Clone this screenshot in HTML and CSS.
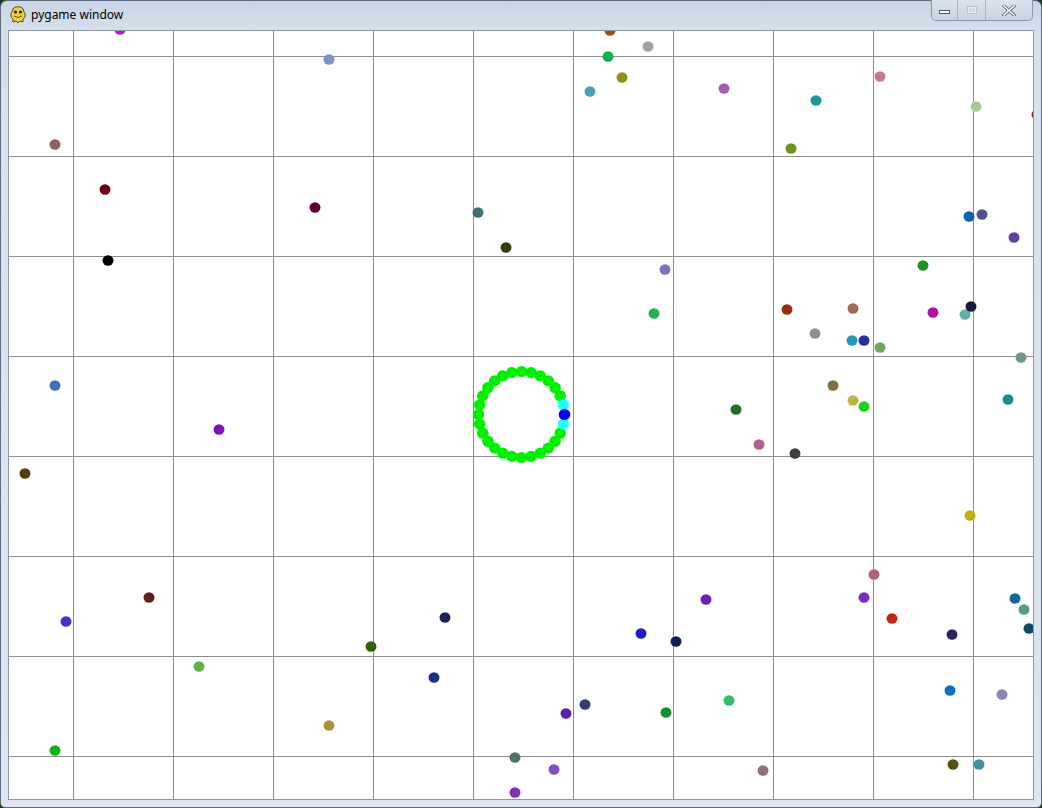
FILE: index.html
```html
<!DOCTYPE html>
<html>
<head>
<meta charset="utf-8">
<title>pygame window</title>
<link rel="stylesheet" href="styles.css">
</head>
<body>
<div class="window">
  <div class="titlebar">
    <svg class="app-icon" width="16" height="18" viewBox="0 0 16 18">
      <path d="M3 3 C4 0 12 0 13 3 L14 6 C16 8 15 12 13 13 L13 16 L10 15 L8 17 L6 15 L3 16 L3 13 C1 12 0 8 2 6 Z" fill="#f2d23a" stroke="#5a4a10" stroke-width="1"/>
      <circle cx="5.5" cy="6" r="1.6" fill="#222"/>
      <circle cx="10.5" cy="6" r="1.6" fill="#222"/>
      <path d="M4 10 Q8 13 12 10" fill="none" stroke="#5a4a10" stroke-width="1"/>
    </svg>
    <span class="title">pygame window</span>
    <div class="caption-buttons">
      <div class="cbtn cmin"><span class="min-glyph"></span></div>
      <div class="cbtn cmax"><span class="max-glyph"></span></div>
      <div class="cbtn cclose">
        <svg width="14" height="11" viewBox="0 0 14 11"><path d="M2 1 L12 10 M12 1 L2 10" stroke="#5c6470" stroke-width="3.2" stroke-linecap="square"/><path d="M2 1 L12 10 M12 1 L2 10" stroke="#ffffff" stroke-width="1.6" stroke-linecap="square"/></svg>
      </div>
    </div>
  </div>
  <div class="client">
    <div class="canvas">
      <svg class="scene" width="1024" height="768" viewBox="9 31 1024 768">
        <rect x="9" y="31" width="1024" height="768" fill="#ffffff"/>
        <g class="grid">
          <line x1="73.5" y1="31" x2="73.5" y2="799"/>
          <line x1="173.5" y1="31" x2="173.5" y2="799"/>
          <line x1="273.5" y1="31" x2="273.5" y2="799"/>
          <line x1="373.5" y1="31" x2="373.5" y2="799"/>
          <line x1="473.5" y1="31" x2="473.5" y2="799"/>
          <line x1="573.5" y1="31" x2="573.5" y2="799"/>
          <line x1="673.5" y1="31" x2="673.5" y2="799"/>
          <line x1="773.5" y1="31" x2="773.5" y2="799"/>
          <line x1="873.5" y1="31" x2="873.5" y2="799"/>
          <line x1="973.5" y1="31" x2="973.5" y2="799"/>
          <line x1="9" y1="56.5" x2="1033" y2="56.5"/>
          <line x1="9" y1="156.5" x2="1033" y2="156.5"/>
          <line x1="9" y1="256.5" x2="1033" y2="256.5"/>
          <line x1="9" y1="356.5" x2="1033" y2="356.5"/>
          <line x1="9" y1="456.5" x2="1033" y2="456.5"/>
          <line x1="9" y1="556.5" x2="1033" y2="556.5"/>
          <line x1="9" y1="656.5" x2="1033" y2="656.5"/>
          <line x1="9" y1="756.5" x2="1033" y2="756.5"/>
        </g>
        <g class="dots">
          <ellipse cx="120" cy="29.5" fill="#b020c0"/>
          <ellipse cx="610" cy="30.5" fill="#905020"/>
          <ellipse cx="648" cy="46.5" fill="#a0a0a8"/>
          <ellipse cx="329" cy="59.5" fill="#8090c0"/>
          <ellipse cx="608" cy="56.5" fill="#10b050"/>
          <ellipse cx="622" cy="77.5" fill="#909010"/>
          <ellipse cx="590" cy="91.5" fill="#50a0b8"/>
          <ellipse cx="724" cy="88.5" fill="#a060a8"/>
          <ellipse cx="816" cy="100.5" fill="#209898"/>
          <ellipse cx="880" cy="76.5" fill="#c87890"/>
          <ellipse cx="976" cy="106.5" fill="#a8c898"/>
          <ellipse cx="1037" cy="114.5" fill="#703030"/>
          <ellipse cx="55" cy="144.5" fill="#906060"/>
          <ellipse cx="791" cy="148.5" fill="#709020"/>
          <ellipse cx="105" cy="189.5" fill="#700010"/>
          <ellipse cx="315" cy="207.5" fill="#600030"/>
          <ellipse cx="478" cy="212.5" fill="#407070"/>
          <ellipse cx="506" cy="247.5" fill="#304010"/>
          <ellipse cx="969" cy="216.5" fill="#1060b0"/>
          <ellipse cx="982" cy="214.5" fill="#505090"/>
          <ellipse cx="1014" cy="237.5" fill="#6040a0"/>
          <ellipse cx="108" cy="260.5" fill="#000000"/>
          <ellipse cx="665" cy="269.5" fill="#8070c0"/>
          <ellipse cx="923" cy="265.5" fill="#209020"/>
          <ellipse cx="787" cy="309.5" fill="#963010"/>
          <ellipse cx="853" cy="308.5" fill="#a06858"/>
          <ellipse cx="933" cy="312.5" fill="#b010a0"/>
          <ellipse cx="965" cy="314.5" fill="#60b0a8"/>
          <ellipse cx="971" cy="306.5" fill="#181838"/>
          <ellipse cx="654" cy="313.5" fill="#20b050"/>
          <ellipse cx="815" cy="333.5" fill="#909090"/>
          <ellipse cx="852" cy="340.5" fill="#2898b8"/>
          <ellipse cx="864" cy="340.5" fill="#2830a0"/>
          <ellipse cx="880" cy="347.5" fill="#70a860"/>
          <ellipse cx="1021" cy="357.5" fill="#709888"/>
          <ellipse cx="55" cy="385.5" fill="#4070c0"/>
          <ellipse cx="833" cy="385.5" fill="#807048"/>
          <ellipse cx="853" cy="400.5" fill="#b8b840"/>
          <ellipse cx="864" cy="406.5" fill="#20d020"/>
          <ellipse cx="736" cy="409.5" fill="#207030"/>
          <ellipse cx="1008" cy="399.5" fill="#109090"/>
          <ellipse cx="219" cy="429.5" fill="#8010c0"/>
          <ellipse cx="759" cy="444.5" fill="#b06090"/>
          <ellipse cx="795" cy="453.5" fill="#404040"/>
          <ellipse cx="25" cy="473.5" fill="#504010"/>
          <ellipse cx="970" cy="515.5" fill="#c0b010"/>
          <ellipse cx="874" cy="574.5" fill="#b06080"/>
          <ellipse cx="149" cy="597.5" fill="#602020"/>
          <ellipse cx="706" cy="599.5" fill="#7020b0"/>
          <ellipse cx="864" cy="597.5" fill="#7030c0"/>
          <ellipse cx="892" cy="618.5" fill="#c02810"/>
          <ellipse cx="1015" cy="598.5" fill="#106898"/>
          <ellipse cx="1024" cy="609.5" fill="#609888"/>
          <ellipse cx="1029" cy="628.5" fill="#104868"/>
          <ellipse cx="66" cy="621.5" fill="#5030c0"/>
          <ellipse cx="445" cy="617.5" fill="#202060"/>
          <ellipse cx="641" cy="633.5" fill="#2020c0"/>
          <ellipse cx="676" cy="641.5" fill="#102050"/>
          <ellipse cx="952" cy="634.5" fill="#302060"/>
          <ellipse cx="371" cy="646.5" fill="#306010"/>
          <ellipse cx="199" cy="666.5" fill="#60b050"/>
          <ellipse cx="434" cy="677.5" fill="#203080"/>
          <ellipse cx="950" cy="690.5" fill="#1070c0"/>
          <ellipse cx="1002" cy="694.5" fill="#9080c0"/>
          <ellipse cx="729" cy="700.5" fill="#30c070"/>
          <ellipse cx="585" cy="704.5" fill="#304070"/>
          <ellipse cx="566" cy="713.5" fill="#6020a0"/>
          <ellipse cx="666" cy="712.5" fill="#109030"/>
          <ellipse cx="329" cy="725.5" fill="#b09040"/>
          <ellipse cx="55" cy="750.5" fill="#10b020"/>
          <ellipse cx="515" cy="757.5" fill="#507060"/>
          <ellipse cx="554" cy="769.5" fill="#8050c0"/>
          <ellipse cx="763" cy="770.5" fill="#907080"/>
          <ellipse cx="953" cy="764.5" fill="#505010"/>
          <ellipse cx="979" cy="764.5" fill="#4090a0"/>
          <ellipse cx="515" cy="792.5" fill="#8030b0"/>
        </g>
        <g class="ring">
          <ellipse cx="560.2" cy="395.8" fill="#00f000"/>
          <ellipse cx="560.2" cy="433.2" fill="#00f000"/>
          <ellipse cx="555.1" cy="387.7" fill="#00f000"/>
          <ellipse cx="555.1" cy="441.3" fill="#00f000"/>
          <ellipse cx="548.3" cy="380.9" fill="#00f000"/>
          <ellipse cx="548.3" cy="448.1" fill="#00f000"/>
          <ellipse cx="540.2" cy="375.8" fill="#00f000"/>
          <ellipse cx="540.2" cy="453.2" fill="#00f000"/>
          <ellipse cx="531.1" cy="372.6" fill="#00f000"/>
          <ellipse cx="531.1" cy="456.4" fill="#00f000"/>
          <ellipse cx="521.5" cy="371.5" fill="#00f000"/>
          <ellipse cx="521.5" cy="457.5" fill="#00f000"/>
          <ellipse cx="511.9" cy="372.6" fill="#00f000"/>
          <ellipse cx="511.9" cy="456.4" fill="#00f000"/>
          <ellipse cx="502.8" cy="375.8" fill="#00f000"/>
          <ellipse cx="502.8" cy="453.2" fill="#00f000"/>
          <ellipse cx="494.7" cy="380.9" fill="#00f000"/>
          <ellipse cx="494.7" cy="448.1" fill="#00f000"/>
          <ellipse cx="487.9" cy="387.7" fill="#00f000"/>
          <ellipse cx="487.9" cy="441.3" fill="#00f000"/>
          <ellipse cx="482.8" cy="395.8" fill="#00f000"/>
          <ellipse cx="482.8" cy="433.2" fill="#00f000"/>
          <ellipse cx="479.6" cy="404.9" fill="#00f000"/>
          <ellipse cx="479.6" cy="424.1" fill="#00f000"/>
          <ellipse cx="478.5" cy="414.5" fill="#00f000"/>
          <ellipse cx="563.4" cy="404.9" fill="#20ffff"/>
          <ellipse cx="563.4" cy="424.1" fill="#20ffff"/>
          <ellipse cx="564.5" cy="414.5" fill="#0000f0"/>
        </g>
      </svg>
    </div>
  </div>
</div>
</body>
</html>
```
FILE: styles.css
```css
html, body {
  margin: 0;
  padding: 0;
  background: #1b3a27;
}
body {
  width: 1042px;
  height: 808px;
  overflow: hidden;
}
.window {
  box-sizing: border-box;
  width: 1042px;
  height: 808px;
  background: linear-gradient(to bottom, #c8d5e4 0px, #d6e0ec 30px, #dde6f0 100%);
  border: 1px solid #5b6b7d;
  border-radius: 7px 7px 5px 5px;
  display: flex;
  flex-direction: column;
  font-family: "Noto Sans", "Open Sans", sans-serif;
}
.titlebar {
  height: 29px;
  display: flex;
  align-items: center;
  padding-left: 9px;
  position: relative;
}
.app-icon {
  display: block;
  margin-top: -1px;
}
.title {
  margin-left: 5px;
  font-size: 12px;
  color: #000;
  margin-top: -2px;
}
.caption-buttons {
  position: absolute;
  top: -1px;
  right: 8px;
  display: flex;
  height: 20px;
  border: 1px solid #8d9aaa;
  border-top: none;
  border-radius: 0 0 5px 5px;
  background: linear-gradient(to bottom, #dae3ee, #c9d4e2);
  overflow: hidden;
}
.cbtn {
  display: flex;
  align-items: center;
  justify-content: center;
}
.cmin {
  width: 25px;
  border-right: 1px solid #a7b3c2;
}
.cmax {
  width: 27px;
  border-right: 1px solid #a7b3c2;
}
.cclose {
  width: 46px;
}
.min-glyph {
  width: 9px;
  height: 2px;
  border: 1px solid #4c5562;
  background: #fff;
  margin-top: 3px;
}
.max-glyph {
  width: 8px;
  height: 6px;
  border: 1px solid #b9c3cf;
  box-shadow: inset 0 0 0 1px #e6ecf3;
}
.client {
  flex: 1;
  padding: 0 7px 7px 7px;
  display: flex;
}
.canvas {
  border: 1px solid #8e98a4;
  width: 1024px;
  height: 768px;
  background: #fff;
}
.scene {
  display: block;
}
.grid line {
  stroke: #8f8f8f;
  stroke-width: 1;
}
.dots ellipse {
  rx: 5.5px;
  ry: 5.2px;
}
.ring ellipse {
  rx: 5.8px;
  ry: 5.6px;
}
```
